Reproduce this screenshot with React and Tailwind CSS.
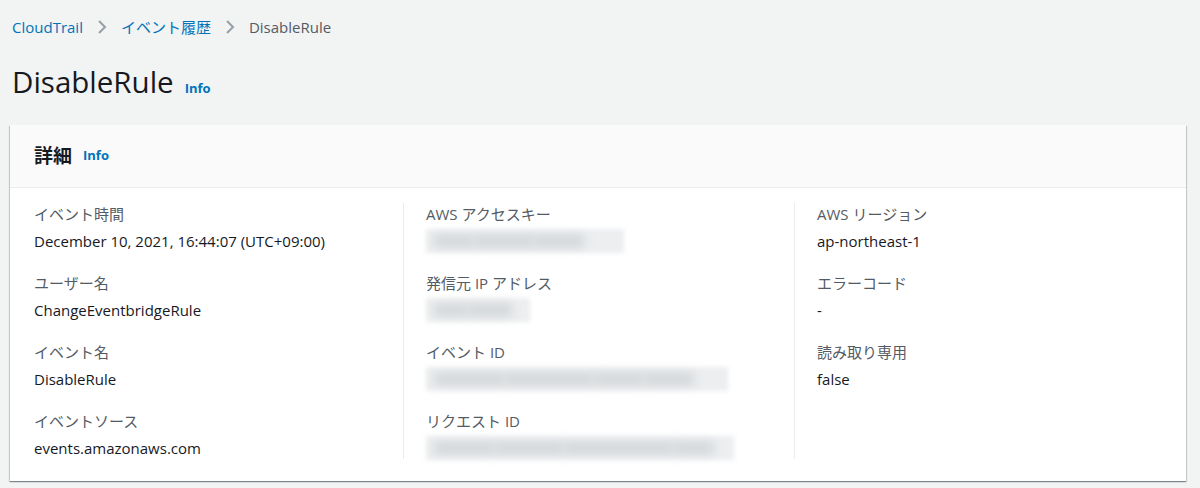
import React from 'react'

const font = { fontFamily: '"Open Sans", "Noto Sans CJK JP", sans-serif' }

function Chevron() {
  return (
    <svg width="10" height="16" viewBox="0 0 10 16" className="mx-[14px]" fill="none">
      <path d="M2 2l6 6-6 6" stroke="#95a0a3" strokeWidth="2" />
    </svg>
  )
}

function Blur({ w, segs }) {
  return (
    <div className="h-[22px] flex items-center" style={{ width: w }}>
      <div className="h-[24px] w-full bg-[#eceef0] blur-[2px] flex items-center px-[8px]">
        {segs.map((s, i) => (
          <div key={i} className="h-[12px] bg-[#d2d5d8] blur-[5px]" style={{ width: s }} />
        ))}
      </div>
    </div>
  )
}

function Item({ label, children }) {
  return (
    <div className="flex flex-col">
      <div className="text-[15px] leading-[22px] text-[#545b64]">{label}</div>
      <div className="mt-[5px] text-[15px] leading-[22px] text-[#16191f]">{children}</div>
    </div>
  )
}

export default function App() {
  return (
    <div className="w-[1200px] h-[488px] bg-[#f2f3f3] overflow-hidden" style={font}>
      {/* パンくず */}
      <div className="flex items-center pl-[12px] pt-[16px] h-[38px] text-[15px]">
        <span className="text-[#0073bb]">CloudTrail</span>
        <Chevron />
        <span className="text-[#0073bb]">イベント履歴</span>
        <Chevron />
        <span className="text-[#545b64]">DisableRule</span>
      </div>

      {/* タイトル */}
      <div className="flex items-baseline pl-[12px] mt-[24px] h-[40px]">
        <h1 className="text-[29.5px] leading-[40px] text-[#16191f]">DisableRule</h1>
        <span className="ml-[11px] text-[13px] font-bold text-[#0073bb]">Info</span>
      </div>

      {/* 詳細カード */}
      <div className="ml-[10px] mt-[23px] w-[1176px] bg-white shadow-[0_1px_1px_0_rgba(0,28,36,0.3),1px_1px_1px_0_rgba(0,28,36,0.15),-1px_1px_1px_0_rgba(0,28,36,0.15)]">
        <div className="h-[63px] bg-[#fafafa] border-b border-[#eaeded] flex items-center pl-[24px]">
          <h2 className="text-[19px] font-bold text-[#16191f]">詳細</h2>
          <span className="ml-[11px] text-[13px] font-bold text-[#0073bb]">Info</span>
        </div>
        <div className="flex pt-[15px] pb-[22px]">
          <div className="w-[393px] pl-[24px] flex flex-col gap-[20px]">
            <Item label="イベント時間">December 10, 2021, 16:44:07 (UTC+09:00)</Item>
            <Item label="ユーザー名">ChangeEventbridgeRule</Item>
            <Item label="イベント名">DisableRule</Item>
            <Item label="イベントソース">events.amazonaws.com</Item>
          </div>
          <div className="w-[391px] border-l border-[#eaeded] pl-[22px] flex flex-col gap-[20px]">
            <Item label="AWS アクセスキー">
              <Blur w={198} segs={[40, 60, 50]} />
            </Item>
            <Item label="発信元 IP アドレス">
              <Blur w={104} segs={[34, 44]} />
            </Item>
            <Item label="イベント ID">
              <Blur w={302} segs={[70, 90, 50, 50]} />
            </Item>
            <Item label="リクエスト ID">
              <Blur w={308} segs={[60, 70, 110, 40]} />
            </Item>
          </div>
          <div className="flex-1 border-l border-[#eaeded] pl-[22px] flex flex-col gap-[20px]">
            <Item label="AWS リージョン">ap-northeast-1</Item>
            <Item label="エラーコード">-</Item>
            <Item label="読み取り専用">false</Item>
          </div>
        </div>
      </div>
    </div>
  )
}
